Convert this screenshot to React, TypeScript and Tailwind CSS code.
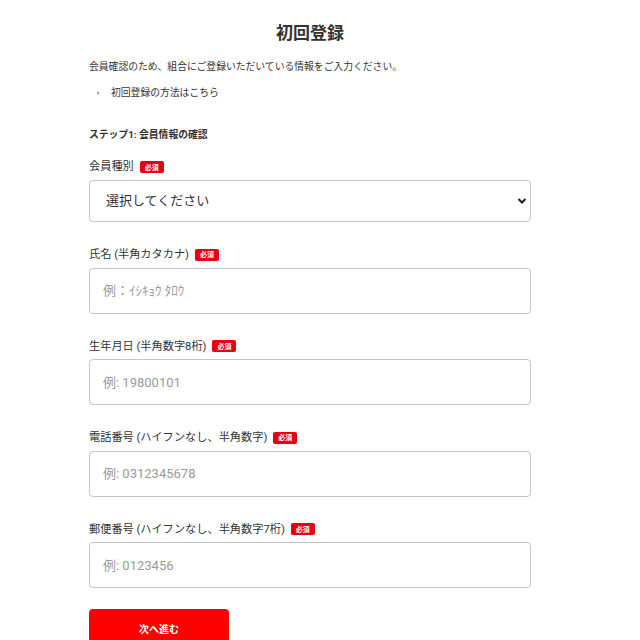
import React from "react";

const font = { fontFamily: 'Roboto, "Noto Sans CJK JP", "Noto Sans", sans-serif' };

function Badge() {
  return (
    <span
      className="inline-flex h-[12px] w-[24px] items-center justify-center rounded-[2px] bg-[#e60012] text-[7px] font-bold leading-none text-white"
      style={{ fontFamily: '"Noto Sans CJK JP", sans-serif' }}
    >
      必須
    </span>
  );
}

function Label({ text }: { text: string }) {
  return (
    <div className="flex h-[16px] items-center gap-[6px] text-[11.2px] leading-none text-[#333]">
      <span>{text}</span>
      <Badge />
    </div>
  );
}

function Field({ label, placeholder }: { label: string; placeholder: string }) {
  return (
    <div className="mt-[24.6px]">
      <Label text={label} />
      <input
        placeholder={placeholder}
        className="mt-[5px] block h-[46px] w-full rounded-[4px] border border-[#c6c6c6] bg-white px-[13px] text-[13px] text-[#333] outline-none placeholder:text-[#9a9a9a]"
        style={font}
      />
    </div>
  );
}

export default function App() {
  return (
    <div className="min-h-[640px] bg-white" style={font}>
      <div className="ml-[89px] w-[442px] pt-[21px]">
        <h1 className="text-center text-[17px] font-bold leading-[24px] text-[#333]">初回登録</h1>
        <p className="mt-[15px] text-[9.8px] leading-[14px] text-[#333]">
          会員確認のため、組合にご登録いただいている情報をご入力ください。
        </p>
        <div className="mt-[12px] flex h-[14px] items-center text-[9.8px] text-[#333]">
          <span className="ml-[8px] mr-[11px] inline-block h-0 w-0 border-y-[2px] border-l-[3px] border-y-transparent border-l-[#aaa]" />
          <span>初回登録の方法はこちら</span>
        </div>
        <div className="mt-[28px] h-[14px] text-[9.8px] font-bold leading-[14px] text-[#333]">
          ステップ1: 会員情報の確認
        </div>
        <div className="mt-[17px]">
          <Label text="会員種別" />
          <div className="relative mt-[5px]">
            <select
              className="block h-[42px] w-full appearance-none rounded-[4px] border border-[#c6c6c6] bg-white px-[16px] text-[13px] text-[#333] outline-none"
              style={font}
              defaultValue=""
            >
              <option value="">選択してください</option>
            </select>
            <svg
              className="pointer-events-none absolute right-[4px] top-[17px]"
              width="10"
              height="8"
              viewBox="0 0 10 8"
            >
              <path d="M1.5 2 L5 5.5 L8.5 2" fill="none" stroke="#222" strokeWidth="2" />
            </svg>
          </div>
        </div>
        <Field label="氏名 (半角カタカナ)" placeholder="例：ｲｼｷｮｳ ﾀﾛｳ" />
        <Field label="生年月日 (半角数字8桁)" placeholder="例: 19800101" />
        <Field label="電話番号 (ハイフンなし、半角数字)" placeholder="例: 0312345678" />
        <Field label="郵便番号 (ハイフンなし、半角数字7桁)" placeholder="例: 0123456" />
        <button
          className="mt-[21px] flex h-[40px] w-[140px] items-center justify-center rounded-[4px] bg-[#ff0000] text-[10px] font-bold text-white"
          style={font}
        >
          次へ進む
        </button>
      </div>
    </div>
  );
}
